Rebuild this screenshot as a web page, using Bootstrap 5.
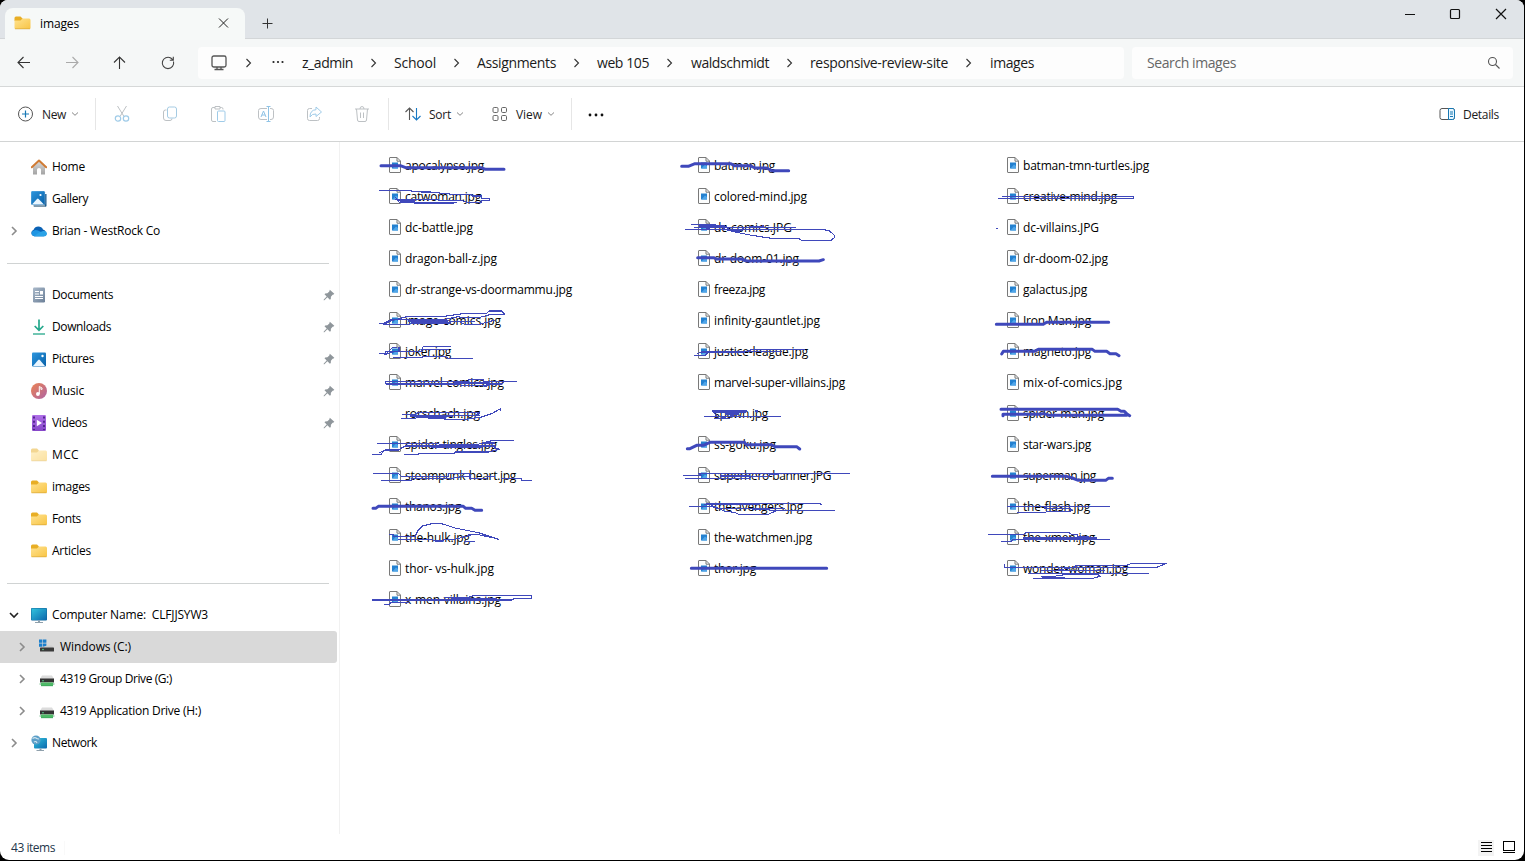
<!DOCTYPE html>
<html lang="en">
<head>
<meta charset="utf-8">
<meta name="viewport" content="width=device-width, initial-scale=1">
<title>images</title>
<link href="https://cdn.jsdelivr.net/npm/bootstrap@5.3.0/dist/css/bootstrap.min.css" rel="stylesheet">
<style>
body{background:#000;font-family:"Open Sans","Noto Sans",sans-serif;font-size:12px;line-height:16px;color:#000;overflow:hidden}
svg{flex:none;display:block}
[data-w]{white-space:pre;display:block;flex:none}
.win{width:1524px;height:860px;background:#fff;border-radius:8px 8px 9px 9px}
.titlebar{height:39px;background:#e0e4e8;border-bottom:1px solid #d3d6d8}
.tab{width:240px;height:32px;margin:8px 0 0 5px;background:#f6f9f8;border-radius:8px 8px 0 0;padding:0 15px 2px 9px}
.tab svg:first-child{margin-right:9px}
.tab [data-w]{padding-top:2px}
.addr{height:48px;background:#f5f7f7;border-bottom:1px solid #d6d8d8;font-size:14px;padding-right:11px;color:#1b1b1b}
.addr [data-w]{padding-top:1px}
.navs{width:198px;padding-left:16px;gap:32px}
.field{height:32px;background:#fdfdfd;border-radius:4px}
.crumbs{width:926px;padding-left:13px}
.search{width:381px;padding:0 12px 0 15px;color:#666}
.tools{height:55px;border-bottom:1px solid #d2d4d4;padding-bottom:1px;color:#1b1b1b}
.tools [data-w]{padding-top:2px}
.vr-line{width:1px;height:32px;background:#e6e6e6}
.side{width:340px;border-right:1px solid #f1f1f1;padding-top:9px;height:692px}
.side li{height:32px;width:337px;padding-left:8px}
.side li.sub{padding-left:16px}
.side li.active-row{background:#d9d9d9;border-radius:0 3px 3px 0}
.side .chev{width:23px}
.side .chev svg{margin-left:-.5px}
.side .ic{width:16px;margin-right:5px}
.side .pin{margin-left:auto;margin-right:2px}
.rule{height:32px;padding:16px 10px 0 7px}
.rule div{height:1px;background:#d0d3d3}
.files{display:grid;grid-template-columns:repeat(3,309px);grid-auto-rows:31px;padding:8px 0 0 49px}
.file .ico{width:16px;height:17px}
.status{height:25px;padding:2px 6px 0 11px;color:#24364a}
.ink{position:absolute;left:0;top:0;pointer-events:none}
.ink path{fill:none;stroke:#3f48bb;stroke-linejoin:round;stroke-linecap:round;stroke-width:3.300;shape-rendering:crispEdges}
.ink .fat{stroke-width:9;shape-rendering:auto}
</style>
</head>
<body>
<svg width="0" height="0" class="position-absolute" aria-hidden="true">
 <defs>
  <linearGradient id="gy" x1="0" y1="0" x2="1" y2="1"><stop stop-color="#ffe391"/><stop offset="1" stop-color="#f8c444"/></linearGradient>
  <linearGradient id="gb" x1="0" y1="0" x2="1" y2="1"><stop stop-color="#2d96de"/><stop offset="1" stop-color="#0760a8"/></linearGradient>
  <linearGradient id="gm" x1="0" y1="0" x2="1" y2="1"><stop stop-color="#ec8352"/><stop offset="1" stop-color="#ae64a4"/></linearGradient>
  <linearGradient id="gc" x1="0" y1="0" x2="1" y2="1"><stop stop-color="#32c4de"/><stop offset="1" stop-color="#0c68ad"/></linearGradient>
  <linearGradient id="gd" x1="0" y1="0" x2="1" y2="1"><stop stop-color="#a9b9ca"/><stop offset="1" stop-color="#6c8098"/></linearGradient>
  <linearGradient id="gv" x1="0" y1="0" x2="0" y2="1"><stop stop-color="#b070e8"/><stop offset="1" stop-color="#8546c8"/></linearGradient>
  <linearGradient id="gh" x1="0" y1="0" x2="0" y2="1"><stop stop-color="#d9d9d9"/><stop offset="1" stop-color="#a3a3a3"/></linearGradient>
 </defs>
 <symbol id="folder" viewBox="0 0 16 16"><path d="M0 3Q0 1.500 1.500 1.500H6L8 3.500V6H0z" fill="#e8ae25"/><path d="M0 5.500H6L8 3.500H14.600Q16 3.500 16 5V13Q16 14 15 14H1Q0 14 0 13z" fill="url(#gy)"/><path d="M.5 13.800H15.500" stroke="#d9a83a" stroke-width=".7"/></symbol>
 <symbol id="home" viewBox="0 0 16 16"><path d="M2 7L8 2l6 5v8.600H10V10.500Q10 9 8 9T6 10.500V15.600H2z" fill="url(#gh)"/><path d="M.8 8.200L8 1.500l7.200 6.700" fill="none" stroke="#d07c35" stroke-width="2" stroke-linecap="round" stroke-linejoin="round"/></symbol>
 <symbol id="gallery" viewBox="0 0 16 16"><path d="M3 3H15.500V14.500Q15.500 15.700 14.500 15.700H3z" fill="#1b5d91"/><path d="M2 14.300L14 14V16H3z" fill="#7f99ab"/><rect width="14" height="14" rx="1.300" fill="url(#gb)" stroke="#fff" stroke-width=".3"/><path d="M1 13.500L6 8q.8-.8 1.600 0L13 13.500z" fill="#eaf6ff"/><circle cx="9.500" cy="4" r="1.100" fill="#fff"/></symbol>
 <symbol id="pictures" viewBox="0 0 16 16"><rect x="1" y="1.500" width="14" height="14" rx="1" fill="url(#gb)"/><path d="M2 15L7.200 9q.8-.8 1.600 0L14 15z" fill="#eaf6ff"/><circle cx="11.500" cy="5" r="1.200" fill="#fff"/></symbol>
 <symbol id="cloud" viewBox="0 0 16 16"><path d="M3.500 13.300A3.400 3.400 0 0 1 2.600 6.700A5.200 5.200 0 0 1 12 6.500A3.600 3.600 0 0 1 12.800 13.300z" fill="#0b62b5"/><path d="M1 8.500Q4 6 7 7.500L11 9.500L15.800 11Q15.500 13.300 13 13.300H3.500Q1 13 .6 11z" fill="#1f95e3"/><path d="M3 13.200L8 9.500L12 8q3.500-.6 4 2.200Q15.500 13.300 13 13.300z" fill="#2ba2e6"/></symbol>
 <symbol id="docs" viewBox="0 0 16 16"><rect x="2" y=".5" width="12" height="15" rx="1.200" fill="url(#gd)"/><path d="M4 4.500H8M4 7H8M4 9.500H12M4 11.500H12" stroke="#fff" stroke-width="1" fill="none"/><rect x="9" y="4" width="3" height="3.500" fill="#fff"/></symbol>
 <symbol id="down" viewBox="0 0 16 16"><path d="M8 .5V11M3.700 7L8 11.400L12.300 7" stroke="#25a88c" stroke-width="1.700" fill="none"/><path d="M2 15H14" stroke="#4eb8a0" stroke-width="1.600"/></symbol>
 <symbol id="music" viewBox="0 0 16 16"><circle cx="8" cy="8" r="8" fill="url(#gm)"/><path d="M8.300 11V3.500L11 5V6.500L9.200 5.700" stroke="#fff" fill="none"/><circle cx="6.900" cy="11" r="1.900" fill="#fff"/></symbol>
 <symbol id="videos" viewBox="0 0 16 16"><rect x="1" width="14" height="16" rx="1.200" fill="url(#gv)"/><path d="M3 1.500V15M13 1.500V15" stroke="#4b2188" stroke-width="1.800" stroke-dasharray="2 2.200"/><path d="M5.800 4.800V11.200L11 8z" fill="#fff"/></symbol>
 <symbol id="pc" viewBox="0 0 16 16"><rect y="1" width="16" height="12.500" rx="1" fill="#12669b"/><rect x=".5" y="1.500" width="15" height="11.500" rx=".6" fill="url(#gc)"/><path d="M7 13.500H9V15H12V16H4V15H7z" fill="#8fa0ac"/></symbol>
 <symbol id="net" viewBox="0 0 16 16"><rect x="3" y="3" width="13" height="10.500" rx="1" fill="url(#gc)"/><path d="M8.500 13.500H10.500V15H13V16H5.500V15H8.500z" fill="#8fa0ac"/><circle cx="5" cy="5" r="4.600" fill="#5c9fc8"/><path d="M1.500 3.500Q4 2 5 3T8 4M3 7Q5 5.500 6 8" stroke="#d2e5ef" fill="none" stroke-width="1.100"/></symbol>
 <symbol id="windrive" viewBox="0 0 16 16"><path d="M0 .5H3.400V3.800H0zM4 .5H7.400V3.800H4zM0 4.500H3.400V7.700H0zM4 4.500H7.400V7.700H4z" fill="#1b7fcc"/><path d="M8 6.500H13L14.800 9H1z" fill="#cfcfcf"/><rect x="1" y="8.500" width="14" height="4" rx=".6" fill="#3a3a3a"/><circle cx="4" cy="10.500" r=".7" fill="#5ef5a0"/></symbol>
 <symbol id="netdrive" viewBox="0 0 16 16"><path d="M3 4.500H13L15 8H1z" fill="#dcdcdc"/><rect x="1" y="7.500" width="14" height="4" fill="#333"/><circle cx="4" cy="9.700" r=".7" fill="#5ef5a0"/><rect x="2" y="11.500" width="12" height="3.500" fill="#65cf78"/><path d="M.5 13H15.500M2 14.700H14" stroke="#2f9c50" stroke-width=".8"/></symbol>
 <symbol id="pinned" viewBox="0 0 12 12"><path d="M6.800 .7L11.300 4.800L10.600 5.600L9.600 5.700L7.900 7.800L7.800 10L6.900 10.700L4.400 8.300L1.400 11.200L.6 11.300L.8 10.500L3.700 7.500L1.500 5.200L2.200 4.400L4.400 4.300L6.300 2.500z" fill="#8f969b"/></symbol>
 <symbol id="right" viewBox="0 0 12 12"><path d="M4 2L8 6L4 10" fill="none" stroke="currentColor" stroke-width="1.600"/></symbol>
 <symbol id="sep" viewBox="0 0 12 12"><path d="M3.500 2L7.500 6L3.500 10" fill="none" stroke="#333" stroke-width="1.100"/></symbol>
 <symbol id="dn" viewBox="0 0 8 8"><path d="M1 2.500L4 5.300L7 2.500" fill="none" stroke="#888"/></symbol>
 <symbol id="jpg" viewBox="0 0 12 17"><path d="M.5 1Q.5 .5 1 .5H8L11.500 4V15Q11.500 15.500 11 15.500H1Q.5 15.500 .5 15z" fill="#fcfdfd" stroke="#797979"/><path d="M8 .5V4.200H11.500" fill="none" stroke="#797979"/><rect x="3" y="5.500" width="6" height="6" fill="#2381d0"/><path d="M3.500 11.500L7 7.500L9 9V11.500z" fill="#4fa5e8"/></symbol>
</svg>

<div class="win position-relative overflow-hidden">
 <header class="titlebar d-flex">
  <div class="tab d-flex align-items-center">
   <svg width="17" height="16"><use href="#folder"/></svg><span data-w="39">images</span>
   <svg class="ms-auto" width="12" height="12" fill="none" stroke="#222"><path d="M1 1.500L10 10.500M10 1.500L1 10.500"/></svg>
  </div>
  <svg class="ms-3 mt-3" width="13" height="14" fill="none" stroke="#333"><path d="M6.500 2.500V12.500M1.500 7.500H11.500"/></svg>
  <div class="ms-auto d-flex pe-3">
   <svg width="104" height="30" fill="none" stroke="#111" stroke-width="1.200"><path d="M1 14.500H11M92 9L102 19M102 9L92 19"/><rect x="46.500" y="9.500" width="9" height="9" rx="1"/></svg>
  </div>
 </header>

 <nav class="addr d-flex align-items-center">
  <div class="navs d-flex">
   <svg width="16" height="16" fill="none" stroke="#333" stroke-width="1.100"><path d="M14 7.500H2M7.500 2L2 7.500L7.500 13"/></svg>
   <svg width="16" height="16" fill="none" stroke="#aaa" stroke-width="1.100"><path d="M2 7.500H14M8.500 2L14 7.500L8.500 13"/></svg>
   <svg width="16" height="16" fill="none" stroke="#333" stroke-width="1.100"><path d="M7.500 14V2M2 7.500L7.500 2L13 7.500"/></svg>
   <svg width="16" height="16" fill="none" stroke="#444" stroke-width="1.100"><path d="M13.500 6.500A5.700 5.700 0 1 1 10.800 3L13 5M13.300 1.800V5.200H9.800"/></svg>
  </div>
  <div class="field crumbs d-flex align-items-center">
   <svg width="17" height="18" fill="none" stroke="#555" stroke-width="1.300"><rect x="1" y="2" width="14" height="11" rx="1.800"/><path d="M6 13V15.500M10 13V15.500M3.500 15.500H12.500"/></svg>
   <svg width="12" height="12" style="margin:0 17px 0 15px"><use href="#sep"/></svg>
   <svg width="13" height="6" fill="#222"><circle cx="1.500" cy="2" r="1.100"/><circle cx="6" cy="2" r="1.100"/><circle cx="10.500" cy="2" r="1.100"/></svg>
   <div id="crumbs" class="d-flex align-items-center"></div>
  </div>
  <div class="field search d-flex align-items-center justify-content-between ms-auto">
   <span data-w="89">Search images</span>
   <svg width="14" height="14" fill="none" stroke="#555" stroke-width="1.100"><circle cx="5.500" cy="5.500" r="4"/><path d="M8.500 8.500L12.500 12.500"/></svg>
  </div>
 </nav>

 <div class="tools d-flex align-items-center" id="tools">
  <svg width="16" height="16" style="margin:0 9px 0 17px" fill="none" stroke="#555"><circle cx="8.500" cy="8" r="7"/><path d="M8.500 4.500V11.500M5 8H12" stroke="#1879b5" stroke-width="1.200"/></svg>
  <span data-w="24">New</span><svg width="8" height="8" style="margin:0 16px 0 5px"><use href="#dn"/></svg>
  <div class="vr-line"></div>
  <div class="d-flex" style="gap:32px;padding:0 18px">
   <svg width="16" height="18" fill="none" stroke="#bdc1c4"><path d="M3.500 1L10 11.500M12.500 1L6 11.500"/><g stroke="#9fcbe8" stroke-width="1.200"><circle cx="4" cy="13.500" r="2.700"/><circle cx="12" cy="13.500" r="2.700"/></g></svg>
   <svg width="16" height="18" fill="none" stroke="#bdc1c4"><path d="M4.500 5H3.500Q1.500 5 1.500 7V13Q1.500 15.500 4 15.500H8Q10 15.500 10 13.500"/><rect x="5.500" y="2" width="9" height="11" rx="2" stroke="#a5cbe3"/></svg>
   <svg width="16" height="18" fill="none" stroke="#bdc1c4"><path d="M5 2.500H3Q1.500 2.500 1.500 4V15Q1.500 16.500 3 16.500H6M10 2.500H11.500Q13 2.500 13 4V4.500M5 1.500H10V4H5z"/><rect x="7.500" y="6" width="7.500" height="10.500" rx="1" stroke="#9fcbe8"/></svg>
   <svg width="16" height="18" class="overflow-visible" fill="none" stroke="#bdc1c4"><path d="M9 3.500H3Q.5 3.500 .5 5.500V12Q.5 14.500 3 14.500H9M12 3.500H13Q15.500 3.500 15.500 5.500V12Q15.500 14.500 13 14.500H12"/><path d="M8.500 1.500H12.500M10.500 1.500V16.500M8.500 16.500H12.500M3 12L5.500 6L8 12M3.800 10H7.200" stroke="#8fc3e6"/></svg>
   <svg width="16" height="18" fill="none" stroke="#bdc1c4"><path d="M6 3.500H3.500Q1.500 3.500 1.500 5.500V13.500Q1.500 15.500 3.500 15.500H11.500Q13.500 15.500 13.500 13.500V12"/><path d="M10 2L15.500 7L10 11.500V9Q6 8.500 4 12Q4 5 10 4.700z" stroke="#9fcbe8"/></svg>
   <svg width="16" height="18" fill="none" stroke="#bdc1c4"><path d="M1 4H15M6 4Q6 1.500 8 1.500T10 4M2.500 4L3.500 15Q3.600 16.500 5 16.500H11Q12.400 16.500 12.500 15L13.500 4M6.500 7.500V13M9.500 7.500V13"/></svg>
  </div>
  <div class="vr-line"></div>
  <svg width="17" height="16" style="margin:0 8px 0 15px" fill="none" stroke="#555" stroke-width="1.100"><path d="M5.500 14V2M1.500 6L5.500 2L9.500 6"/><path d="M12.500 2V14M8.500 10L12.500 14L16.500 10" stroke="#1879c4"/></svg>
  <span data-w="22">Sort</span><svg width="8" height="8" style="margin-left:5px"><use href="#dn"/></svg>
  <svg width="16" height="16" style="margin:0 8px 0 28px" fill="none" stroke="#666"><rect x="1" y="1.500" width="5" height="5" rx="1.200"/><rect x="9.500" y="1.500" width="5" height="5" rx="1.200"/><rect x="1" y="9.500" width="5" height="5" rx="1.200"/><rect x="9.500" y="9.500" width="5" height="5" rx="1.200"/></svg>
  <span data-w="26">View</span><svg width="8" height="8" style="margin:0 16px 0 5px"><use href="#dn"/></svg>
  <div class="vr-line"></div>
  <svg width="18" height="8" style="margin-left:15px" fill="#111"><circle cx="3" cy="5" r="1.400"/><circle cx="9" cy="5" r="1.400"/><circle cx="15" cy="5" r="1.400"/></svg>
  <svg width="17" height="14" class="ms-auto" style="margin-right:7px" fill="none" stroke="#555"><rect x="1" y="1.500" width="14.500" height="11" rx="2"/><path d="M9.500 1.500H14Q15.500 2 15.500 4V10Q15.500 12.500 13.500 12.500H9.500zM11 5H14M11 7H14M11 9.500H14" stroke="#1778b3" fill="#eaf7ff"/></svg>
  <span data-w="36" style="margin-right:25px">Details</span>
 </div>

 <main class="d-flex">
  <aside class="side flex-shrink-0"><ul class="list-unstyled mb-0" id="side"></ul></aside>
  <section><div class="files" id="files"></div></section>
 </main>

 <footer class="status d-flex align-items-center">
  <span data-w="44">43 items</span><div class="vr-line opacity-25" style="height:14px;margin-left:9px"></div>
  <svg class="ms-auto" width="40" height="16" fill="none" stroke="#000"><rect width="16" height="16" fill="#f3f3f3" stroke="none"/><path d="M3 2.500H14M3 5.500H14M3 8.500H14M3 11.500H14"/><rect x="25.500" y="1.500" width="11" height="9"/><path d="M25 12.500H37"/></svg>
 </footer>

 <!-- pen strokes over the file list -->
 <svg class="ink" width="1524" height="700">
  <g transform="translate(365 150) scale(.33333)">
   <path class="fat" d="M48 47H106L122 53H348L362 58H417"/>
   <path d="M45 122H130L170 126H195L240 131L280 134H320V138H350V146H374V152H350V158H310L290 152H230L210 148H92M92 143L104 158H275M104 153H150M150 158V161H265"/>
   <path d="M45 520H62L80 512L125 500H230L300 490H365L373 483H410L420 494H375L340 503H290L280 500L240 508H80L60 518M57 524H130L140 519H255V515H330M130 513H250M285 515L300 524H340L390 510"/>
   <path d="M45 610H65L82 593H95M60 614L62 604H82M60 614L90 604H170V598H250M170 598L175 590H257M85 622H170L180 619H240L250 626H324M80 604H102V592"/>
   <path d="M455 694H420L410 702H380L360 710M455 694H355V688H310V694H62V702H270L290 706H360L376 700H130M270 697H370"/>
  </g>
  <g transform="translate(365 370) scale(.33333)">
   <path style="stroke-width:8" d="M138 138H260M190 142H235"/>
   <path d="M110 145H150L165 141H240V148H300L350 141L380 131L407 116V121M112 133H150L160 128H345L335 133M240 136H345"/>
   <path d="M38 221H220L230 225H330L380 212H446M22 253H48L60 240H100L120 228H390V236H402M45 247L55 243M120 253H160V250H270V246H370L402 238M200 233H350L355 219H390"/>
   <path d="M27 310H100L110 320H250V311H315V325H365M50 331H140V325H260L290 320H310M365 320H390M410 325H470V331H500"/>
   <path class="fat" d="M24 415H32L40 409H295L302 415H320L330 421H350"/>
   <path d="M74 493H86V500H150L160 480L172 468L200 461H230L270 474L340 488L400 508M100 508H200L210 513H235M310 494H340L397 506M235 508H270L300 500L325 493M300 514H330"/>
   <path d="M22 690H440L450 685H500V677H325L310 682H240M60 704H70L80 697H130M250 691L260 686H395"/>
  </g>
  <g transform="translate(675 150) scale(.33333)">
   <path class="fat" d="M20 49H40L60 41H168L178 47H225L240 54H275L290 62H341M68 323H116L124 327H200L214 333H432L445 329"/>
   <path d="M33 238H440L462 242L479 256V262L468 271H380L370 265H290L230 256L180 246L150 238L140 230H120V223H50M58 233H362M72 228H150L170 243H195L210 232L265 228V233M90 238L135 226"/>
   <path d="M58 616H90L100 608H190M68 611L78 606H210L230 599H390M210 605H320"/>
  </g>
  <g transform="translate(675 370) scale(.33333)">
   <path style="stroke-width:8" d="M115 124H213M155 132H190M243 124H246"/>
   <path d="M90 139H317M118 145H165M118 130L125 139M135 145L190 132"/>
   <path class="fat" d="M37 236H45L65 226H85L105 217H208L214 224H290L300 230H365L374 237M49 595H455"/>
   <path d="M27 317H80L72 311H525M33 325H225V320H275L285 314H310M135 318H225"/>
   <path d="M45 409H110L125 415H200L300 421H480M95 400H432L440 404M110 406L150 424L180 427L190 433H280L300 424M90 404H250V400M125 415H330"/>
  </g>
  <g transform="translate(985 150) scale(.33333)">
   <path d="M40 145H446V139H52M36 235h2"/>
   <path class="fat" d="M34 523H175L185 517H371M50 612L55 604H148L160 598H322L330 604H365L375 611H393L402 617"/>
  </g>
  <g transform="translate(985 370) scale(.33333)">
   <path class="fat" d="M48 118H398L408 124H418L425 131L434 137M54 137V133H160L175 131L195 136H425M22 319H245L262 324L280 331H362L370 325H382"/>
   <path d="M68 409H375M98 427H180L190 424H258V416H180V412"/>
   <path d="M12 493H115L125 487H250L260 493H278V499H300L335 506M85 508H375M50 514H78L85 508M115 504H335"/>
   <path d="M58 585V592H515L545 580H440L425 586H275L265 592L220 600M130 610H492M145 626H320L345 619L340 614H240L200 620H170L180 624H240M170 601H360"/>
  </g>
 </svg>
</div>
<script src="https://cdn.jsdelivr.net/npm/bootstrap@5.3.0/dist/js/bootstrap.bundle.min.js"></script>
<script>
const use=(id,w,h)=>`<svg width="${w}" height="${h}"><use href="#${id}"/></svg>`;
// breadcrumb: label, text width, start offset of the label
document.getElementById('crumbs').innerHTML=[['z_admin',51,302],['School',42,394],['Assignments',79,477],['web 105',52,597],['waldschmidt',78,691],['responsive-review-site',138,810],['images',44,990]]
 .map(([t,w,x],i,a)=>{const n=a[i+1];return `<span data-w="${w}"${i?'':' style="margin-left:17px"'}>${t}</span>`+(n?`<div class="d-flex justify-content-center" style="width:${n[2]-x-w}px">${use('sep',12,12)}</div>`:'')}).join('');
// sidebar: icon, label, text width, flags (p pinned, r collapsed, d expanded, s nested, a active, f faded)
const rows=[['home','Home',33,''],['gallery','Gallery',36,''],['cloud','Brian - WestRock Co',108,'r'],0,
['docs','Documents',61,'p'],['down','Downloads',59,'p'],['pictures','Pictures',42,'p'],['music','Music',32,'p'],['videos','Videos',35,'p'],
['folder','MCC',27,'f'],['folder','images',38,''],['folder','Fonts',29,''],['folder','Articles',39,''],0,
['pc','Computer Name:  CLFJJSYW3',156,'d'],['windrive','Windows (C:)',71,'rsa'],['netdrive','4319 Group Drive (G:)',112,'rs'],['netdrive','4319 Application Drive (H:)',141,'rs'],['net','Network',45,'r']];
document.getElementById('side').innerHTML=rows.map(r=>{
 if(!r)return '<div class="rule"><div></div></div>';
 const [ic,t,w,f]=r,h=c=>f.includes(c);
 const chev=h('r')?`<span style="color:#8c8c8c">${use('right',12,12)}</span>`:h('d')?'<svg width="12" height="12" fill="none" stroke="#222" stroke-width="1.600"><path d="M2 4L6 8L10 4"/></svg>':'';
 return `<li class="d-flex align-items-center ${h('s')?'sub':''} ${h('a')?'active-row':''}"><span class="chev">${chev}</span><span class="ic ${h('f')?'opacity-50':''}">${use(ic,16,16)}</span><span data-w="${w}">${t}</span>${h('p')?'<span class="pin">'+use('pinned',12,12)+'</span>':''}</li>`}).join('');
// files: name and text width
const files=[['apocalypse.jpg',79],['batman.jpg',61],['batman-tmn-turtles.jpg',126],['catwoman.jpg',76],['colored-mind.jpg',93],['creative-mind.jpg',94],['dc-battle.jpg',68],['dc-comics.JPG',78],['dc-villains.JPG',76],['dragon-ball-z.jpg',92],['dr-doom-01.jpg',85],['dr-doom-02.jpg',85],['dr-strange-vs-doormammu.jpg',167],['freeza.jpg',51],['galactus.jpg',64],['image-comics.jpg',96],['infinity-gauntlet.jpg',106],['Iron Man.jpg',68],['joker.jpg',46],['justice-league.jpg',94],['magneto.jpg',68],['marvel-comics.jpg',99],['marvel-super-villains.jpg',131],['mix-of-comics.jpg',99],['rorschach.jpg',75],['spawn.jpg',54],['spider-man.jpg',81],['spider-tingles.jpg',92],['ss-goku.jpg',62],['star-wars.jpg',68],['steampunk-heart.jpg',111],['superhero-banner.JPG',117],['superman.jpg',73],['thanos.jpg',56],['the-avengers.jpg',89],['the-flash.jpg',67],['the-hulk.jpg',65],['the-watchmen.jpg',98],['the-xmen.jpg',72],['thor- vs-hulk.jpg',89],['thor.jpg',42],['wonder-woman.jpg',105],['x-men-villains.jpg',96]];
document.getElementById('files').innerHTML=files.map(([t,w])=>`<div class="file d-flex align-items-center"><span class="ico">${/^(rors|spawn)/.test(t)?'':use('jpg',12,17)}</span><span data-w="${w}">${t}</span></div>`).join('');
// tracks each label to its own width
document.querySelectorAll('[data-w]').forEach(e=>{
 const r=document.createRange();r.selectNodeContents(e);
 const d=(+e.dataset.w-r.getBoundingClientRect().width)/e.textContent.length;
 e.style.letterSpacing=d.toFixed(3)+'px';e.style.width=e.dataset.w+'px';
});
</script>
</body>
</html>
